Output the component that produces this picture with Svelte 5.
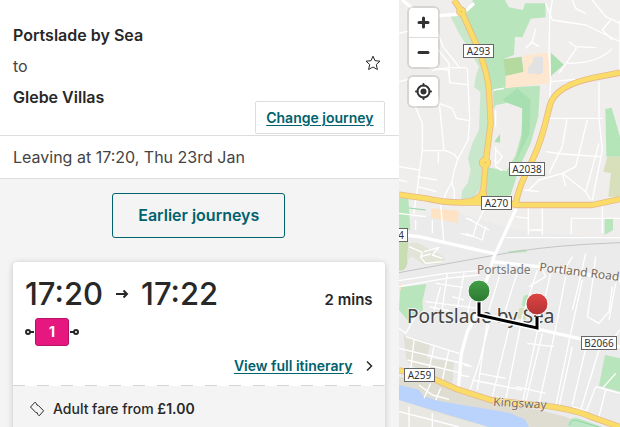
<script>
  const journey = {
    from: 'Portslade by Sea',
    to: 'Glebe Villas',
    leaving: 'Leaving at 17:20, Thu 23rd Jan',
    depart: '17:20',
    arrive: '17:22',
    duration: '2 mins',
    service: '1',
    fare: '£1.00',
  };

  // Map geometry is stored at three units to the pixel
  const areas = [
    { fill: '#c9e7cb', d: 'M152 45L170 42L192 46L232 140L262 230L270 330L266 430L250 490L248 560L225 590L186 602L190 570L206 550L215 510L207 475L220 430L240 390L244 275L226 262L230 230L240 200L208 145L180 100Z' },
    { fill: '#b9e5bc', d: 'M188 28L215 18L222 0H318L330 22L372 30L378 10L439 10L440 52L395 56L370 112L348 110L345 165L312 178L322 225L320 262L280 270L270 225L256 175L215 82L203 52Z' },
    { fill: '#b9e5bc', d: 'M282 272L320 262L423 257L418 350L395 430L362 500L335 585L320 590H260L262 500L322 514L350 465L368 400L370 325L325 308L290 316L284 330Z' },
    { fill: '#a8dfb0', d: 'M310 300L355 265L395 300L392 400L360 465L345 500L368 420L370 325L325 308Z' },
    { fill: '#b5daa0', d: 'M312 178L368 170L374 218L320 228Z' },
    { fill: '#fee7cf', d: 'M370 167L452 156V250L320 265V228L375 215Z' },
    { fill: '#e2e2e2', d: 'M388 200L400 190L404 170H432V218L415 226L408 220L386 222Z' },
    { fill: '#abe0b0', d: 'M456 158L494 194L456 228Z' },
    { fill: '#b4e5b9', d: 'M619 327L638 323L663 410V470H622Z' },
    { fill: '#d8dfbb', d: 'M625 470H663V590H628L636 520L613 515Z' },
    { fill: '#abe0b0', d: 'M303 402V428L286 425Z' },
    { fill: '#fee2c4', d: 'M97 625L180 633L176 670L98 653Z' },
    { fill: '#b9e5bc', d: 'M0 595L28 592L34 690H0ZM617 655H642V690L617 705ZM328 754L380 748L384 756L330 760Z' },
    { fill: '#c9ddb2', d: 'M0 725H28L25 790Q20 815 0 812Z' },
    { fill: '#e2e4d8', d: 'M28 730L55 728L78 740L125 765L138 775L128 792L75 794L40 770L24 780Z' },
    { fill: '#b9e5bc', d: 'M4 862L82 852L70 905L72 930L30 965L0 930Z' },
    { fill: '#fee2c4', d: 'M0 850L9 852L5 870L0 872Z' },
    { fill: '#b9e5bc', d: 'M374 887L388 883V920L368 918Z' },
    { fill: '#d8dfbb', d: 'M360 925L385 920L380 960L355 955Z' },
    { fill: '#b9e5bc', d: 'M618 1065L663 1075V1175L600 1157Z' },
    { fill: '#e1e0d7', d: 'M14 1006L95 1030L83 1075L165 1085L160 1160L70 1120L22 1082Z' },
    { fill: '#dfddd2', d: 'M0 1130L85 1142L180 1172L275 1202L420 1230L500 1250L560 1281H0Z' },
    { fill: '#e8e7e2', d: 'M0 1200L150 1248L270 1281H0Z' },
    { fill: '#b9d3fd', d: 'M0 1155L60 1169L72 1187L120 1203L190 1215L250 1225L330 1238L378 1258L390 1281H270L150 1245L0 1200Z' },
    { fill: '#bce6c5', d: 'M508 1270Q512 1250 535 1254L610 1281H508Z' },
  ];

  const streets = [
    'M8 0L30 20M0 100L28 93M0 245L28 238M90 203L148 210L153 250M115 95L132 140L184 206M102 130L150 190L152 248L205 254M98 84L115 95',
    'M203 203H148L98 212M205 205L212 358L207 420L176 478L165 515L158 550',
    'M45 310L70 370V450L52 590L44 640M105 250L120 300L135 450M120 310L160 325L172 355L212 362',
    'M70 452H140L165 462L178 480M118 455V490M0 500L60 510M0 540L25 545M55 530L113 540M55 560L112 575M133 600L145 570L158 548L166 570V600',
    'M460 0L452 50L450 160L455 240L450 350M440 10L460 60L560 75L663 125M520 0L530 25L560 40M580 0L620 50L663 70M510 125L530 140L590 143M505 190Q600 190 640 145M535 140L500 192L480 220M410 85L400 125L380 145M395 125L420 140',
    'M456 245L530 238M663 60V210M600 245V355L610 450L580 600M450 355H610M440 455L490 462L604 470M504 358L490 440L450 520M565 360L530 500L490 520M390 570L420 540L490 520L560 575L575 600M490 520L500 560M600 430L560 575M375 570L420 575M635 60L610 90L640 120',
    'M285 270L315 265M290 330V380M292 450L310 470L295 490L285 480M290 440V500L310 512M430 625V705M517 655H663M517 655V703M388 615V705M320 713H663M610 620V700M350 650L388 655M390 690H430',
    'M100 660V700M50 660V690M205 655L270 690M185 700L222 710L232 675L255 630M125 615L135 730M260 680L250 720L200 700M200 655L220 660M0 640L80 650',
    'M30 740L70 757L65 772L80 790L130 785M75 755L120 742L100 765L130 775M65 770L95 762',
    'M0 842L140 820L240 812M0 860L140 835L240 825M145 820L130 925M195 820L170 950M80 905L240 925M110 850L192 862M90 920L150 932M125 860L105 930M195 900L160 890M220 880L205 940',
    'M310 800L270 930L235 1170M360 800L310 960M415 810L370 950L320 1200M455 820L420 970L370 1210M500 830L470 985L420 1210M550 840L515 1000L470 1220M560 760L540 850L520 930M590 770L580 850L565 950L600 970L630 935L640 860M650 850L630 960M520 770L490 820M420 785L440 830L390 860',
    'M270 975L240 1090L210 1180M330 985L280 1190M430 1000L380 1205M520 1040L480 1220M560 1045L520 1215M600 1050L545 1230M385 1030L465 1040M350 1160L440 1180M590 1160L663 1180M590 1160L560 1240M220 1140L370 1170M663 990L625 1040M520 1220L560 1232M620 1170L600 1250',
    'M20 1010L180 1060M0 1045L210 1095M25 1080L190 1120M45 1020L35 1110M105 1040L85 1130M150 1050L130 1140M60 930L20 1000L0 985M195 1095L220 1100M180 1125L210 1130M60 1155L100 1185L150 1198M95 1150L75 1195M125 1165L110 1200M30 1220V1281M100 1240V1281M0 1235L100 1260L180 1281',
    'M240 1120L320 1135M650 1120L610 1165M290 1190L400 1222L560 1240M380 1215L440 1225',
  ];

  const avenues = [
    'M120 47L190 42L225 10',
    'M10 0L40 25',
    'M24 706L60 710L288 762',
    'M352 625L320 695L285 770L260 850',
    'M280 785L420 800L663 840',
    'M238 945L420 988L545 1017L663 1040',
    'M240 930L205 995L187 1060L178 1165',
  ];

  const mainRoads = [
    'M165 0L188 35L235 140Q265 215 270 270L275 370L260 488L254 560Q252 605 185 607',
    'M0 584L80 595Q130 607 190 608H330L350 615H580L663 597',
    'M663 218L590 232Q470 255 453 315L435 385Q420 440 398 485Q360 555 350 612',
    'M0 1111L60 1124L100 1135L175 1168L275 1200L420 1216Q520 1225 575 1250L663 1281',
  ];

  const shields = [
    { name: 'A293', x: 64, y: 44, w: 31 },
    { name: 'A2038', x: 110, y: 162, w: 36 },
    { name: 'A270', x: 82, y: 196, w: 31 },
    { name: '4', x: -22, y: 228, w: 31, textX: 2 },
    { name: 'B2066', x: 182, y: 336, w: 36 },
    { name: 'A259', x: 5, y: 368, w: 31 },
  ];
</script>

<div class="planner">
  <main class="panel">
    <header class="summary">
      <div class="places">
        <strong>{journey.from}</strong>
        <span>to</span>
        <strong>{journey.to}</strong>
      </div>
      <div class="summary-actions">
        <button class="star" aria-label="Save journey">
          <svg width="16" height="16" viewBox="0 0 16 16">
            <path d="M8 1.2L10 5.7L15 6.2L11.3 9.5L12.4 14.5L8 12L3.6 14.5L4.7 9.5L1 6.2L6 5.7Z" />
          </svg>
        </button>
        <a class="change" href="#change">Change journey</a>
      </div>
    </header>
    <p class="leaving">{journey.leaving}</p>

    <section class="results">
      <button class="earlier">Earlier journeys</button>

      <article class="card">
        <div class="card-body">
          <div class="times">
            <h2>
              {journey.depart}
              <svg width="14" height="10" viewBox="0 0 14 10" aria-label="to">
                <path d="M1 5H12M8.5 1.5L12 5L8.5 8.5" />
              </svg>
              {journey.arrive}
            </h2>
            <strong>{journey.duration}</strong>
          </div>
          <div class="legs">
            <svg width="9" height="8" viewBox="0 0 9 8"><circle cx="3" cy="4" r="2" /><path d="M5 4H9" /></svg>
            <span class="service">{journey.service}</span>
            <svg width="9" height="8" viewBox="0 0 9 8"><circle cx="6" cy="4" r="2" /><path d="M0 4H4" /></svg>
          </div>
          <div class="more">
            <a href="#itinerary">View full itinerary</a>
            <svg width="8" height="12" viewBox="0 0 8 12"><path d="M2 1.5L6.5 6L2 10.5" /></svg>
          </div>
        </div>
        <svg class="tear" width="100%" height="1"><line x1="0" y1="0.5" x2="100%" y2="0.5" /></svg>
        <footer class="fare">
          <svg width="16" height="16" viewBox="0 0 16 16">
            <path d="M1.5 6L6 1.2L7.5 2.6Q7.4 4.6 9.4 4.5L14.6 9.8L10.2 14.8L8.6 13.2Q8.8 11.2 6.7 11.4Z" />
          </svg>
          <span>Adult fare from <b>{journey.fare}</b></span>
        </footer>
      </article>
    </section>
  </main>

  <aside class="map">
    <svg class="map-canvas" width="100%" height="100%" role="img" aria-label="Route map">
      <defs>
        <linearGradient id="start" x2="0" y2="1">
          <stop offset="0" stop-color="#43a047" />
          <stop offset="1" stop-color="#2b782f" />
        </linearGradient>
        <linearGradient id="finish" x2="0" y2="1">
          <stop offset="0" stop-color="#e04343" />
          <stop offset="1" stop-color="#b23434" />
        </linearGradient>
      </defs>

      <g transform="scale(0.33333)">
        <path class="built" d="M0 660L180 640L350 690L663 720V1281H0Z" />
        {#each areas as area}
          <path d={area.d} fill={area.fill} />
        {/each}
        {#each streets as d}
          <path class="street" {d} />
        {/each}
        <path class="railway" d="M0 818Q230 775 350 755T663 728" />
        {#each avenues as d}
          <path class="avenue" {d} />
        {/each}
        {#each mainRoads as d}
          <path class="casing" {d} />
        {/each}
        <circle class="junction" cx="187" cy="35" r="14" />
        <circle class="junction" cx="258" cy="488" r="17" />
        <path class="junction" d="M185 607Q235 603 246 570L262 572V614Z" />
        {#each mainRoads as d}
          <path class="main-road" {d} />
        {/each}
        <circle class="island" cx="187" cy="35" r="2" />
        <circle class="island" cx="259" cy="488" r="2" />
        <path class="path" d="M512 1275Q515 1256 535 1262L600 1281M30 624L80 630" />
      </g>

      {#each shields as shield}
        <g class="shield">
          <rect x={shield.x + 0.5} y={shield.y + 0.5} width={shield.w - 1} height="13" />
          <text x={shield.textX ?? shield.x + shield.w / 2} y={shield.y + 11}>{shield.name}</text>
        </g>
      {/each}

      <text class="station" x="78" y="274">Portslade</text>
      <text class="road-name" transform="translate(140 271) rotate(7)">Portland Road</text>
      <text class="road-name" transform="translate(94 406) rotate(3)">Kingsway</text>
      <text class="town" x="8" y="323">Portslade by Sea</text>

      <path class="route-halo" d="M80 302V315L138 328V317" />
      <path class="route" d="M80 302V315L138 328V317" />
      <circle class="pin" cx="80" cy="291" r="11" fill="url(#start)" />
      <circle class="pin" cx="138" cy="304" r="11" fill="url(#finish)" />
    </svg>

    <div class="controls">
      <div class="control-group">
        <button aria-label="Zoom in">
          <svg width="29" height="29" viewBox="0 0 29 29"><path d="M10 14.5H19M14.5 10V19" /></svg>
        </button>
        <button aria-label="Zoom out">
          <svg width="29" height="29" viewBox="0 0 29 29"><path d="M10 14.5H19" /></svg>
        </button>
      </div>
      <div class="control-group">
        <button aria-label="Find my location">
          <svg width="29" height="29" viewBox="0 0 29 29">
            <circle class="ring" cx="14.5" cy="14.5" r="6" />
            <circle class="dot" cx="14.5" cy="14.5" r="3" />
            <path class="ticks" d="M14.5 7V8.5M14.5 20.5V22M7 14.5H8.5M20.5 14.5H22" />
          </svg>
        </button>
      </div>
    </div>
  </aside>
</div>

<style>
  :global(body) { margin: 0; }

  .planner {
    display: grid; grid-template-columns: minmax(0, 9fr) minmax(0, 5fr);
    height: 100vh; overflow: hidden;
    background: #f4f4f4; color: #282828;
    font-family: Inter, "Liberation Sans", sans-serif; font-size: 16px;
  }
  button { padding: 0; font-family: inherit; cursor: pointer; }
  svg { display: block; fill: none; stroke: #282828; }
  a { color: #00626d; font-size: 14px; font-weight: 600; text-underline-offset: 2px; }

  .panel { overflow: hidden; }
  .summary {
    display: flex; justify-content: space-between;
    padding: 20px 14px 1px 13px;
    background: #fff; border-bottom: 1px solid #ddd;
  }
  .places { display: flex; flex-direction: column; line-height: 31px; }
  .places strong { font-weight: 600; }
  .places span { color: #444; }
  .summary-actions {
    display: flex; flex-direction: column; align-items: flex-end; justify-content: space-between;
    padding-top: 35px; gap: 30px;
  }
  .star { margin-right: 4px; border: none; background: none; }
  .change {
    padding: 0 10px;
    border: 1px solid #ddd; border-radius: 2px;
    line-height: 31px;
  }
  .leaving {
    margin: 0; padding: 0 13px;
    background: #fff; border-bottom: 1px solid #ddd;
    color: #444; line-height: 42px;
  }

  .results {
    display: flex; flex-direction: column; align-items: center; gap: 24px;
    padding: 14px 14px 0 13px;
  }
  .earlier {
    padding: 0 25px;
    border: 1px solid #00626d; border-radius: 3px;
    background: none; color: #00626d;
    font-size: 16px; font-weight: 600; line-height: 43px;
  }
  .card {
    align-self: stretch;
    background: #fff; border-radius: 4px;
    box-shadow: 0 1px 6px rgba(0, 0, 0, 0.2);
  }
  .card-body { padding: 13px 12px 7px 12px; }
  .times { display: flex; justify-content: space-between; align-items: baseline; }
  .times strong { font-size: 15px; font-weight: 600; }
  h2 {
    display: flex; align-items: center; gap: 12px;
    margin: 0;
    font-size: 31px; font-weight: 500; line-height: 38px;
  }
  h2 svg { stroke-width: 2; }
  .legs { display: flex; align-items: center; gap: 1px; margin-top: 5px; }
  .legs svg { stroke-width: 2; }
  .service {
    padding: 0 13px;
    border: 1px solid #b51263; border-radius: 3px;
    background: #e6187f; color: #fff;
    font-size: 14px; font-weight: 700; line-height: 26px;
  }
  .more {
    display: flex; align-items: center; justify-content: flex-end; gap: 12px;
    margin-top: 8px;
    line-height: 24px;
  }
  .more svg { stroke-width: 1.5; }
  .tear line { stroke: #d4d4d4; stroke-dasharray: 12 12; }
  .fare {
    display: flex; align-items: center; gap: 8px;
    padding: 11px 16px 32px;
    background: #f4f4f4;
    font-size: 14px; font-weight: 500; line-height: 24px;
  }
  .fare b { font-weight: 600; }

  .map { position: relative; overflow: hidden; background: #efeeed; }
  .map-canvas { stroke: none; }
  .built { fill: #ebebeb; }
  .street { stroke: #fff; stroke-width: 4; stroke-linejoin: round; }
  .avenue { stroke: #fff; stroke-width: 10; stroke-linejoin: round; }
  .railway { stroke: #c4c4c4; stroke-width: 3; }
  .casing { stroke: #e9b98a; stroke-width: 19; stroke-linejoin: round; }
  .main-road { stroke: #f9dd68; stroke-width: 14; stroke-linejoin: round; }
  .junction { fill: #f9dd68; stroke: #e9b98a; stroke-width: 3; }
  .island { fill: #e0a060; }
  .path { stroke: #8fd6a4; stroke-width: 3; }
  .map text { font-family: "Noto Sans", "Open Sans", sans-serif; stroke-linejoin: round; paint-order: stroke; }
  .shield rect { fill: #fff; stroke: #666; }
  .shield text { fill: #333; font-size: 10px; text-anchor: middle; }
  .station { fill: #777; stroke: #f2f2f2; stroke-width: 2; font-size: 12px; }
  .road-name { fill: #76695c; stroke: #f4f0ea; stroke-width: 1; font-size: 12px; }
  .town { fill: #444; stroke: #f2f2f2; stroke-width: 2; font-size: 19px; }
  .route-halo { stroke: #fff; stroke-width: 6; }
  .route { stroke: #000; stroke-width: 3; }
  .pin { stroke: #fff; stroke-width: 1; }

  .controls {
    position: absolute; top: 8px; left: 10px;
    display: flex; flex-direction: column; gap: 10px;
  }
  .control-group {
    border-radius: 4px; overflow: hidden;
    background: #fff; box-shadow: 0 0 0 2px rgba(0, 0, 0, 0.1);
  }
  .control-group button { display: block; border: none; background: none; }
  .control-group button + button { border-top: 1px solid #ddd; }
  .control-group svg { stroke: #333; stroke-width: 3; stroke-linecap: round; }
  .control-group .ring { stroke-width: 2; }
  .control-group .dot { fill: #333; stroke: none; }
  .control-group .ticks { stroke-width: 2; }
</style>
